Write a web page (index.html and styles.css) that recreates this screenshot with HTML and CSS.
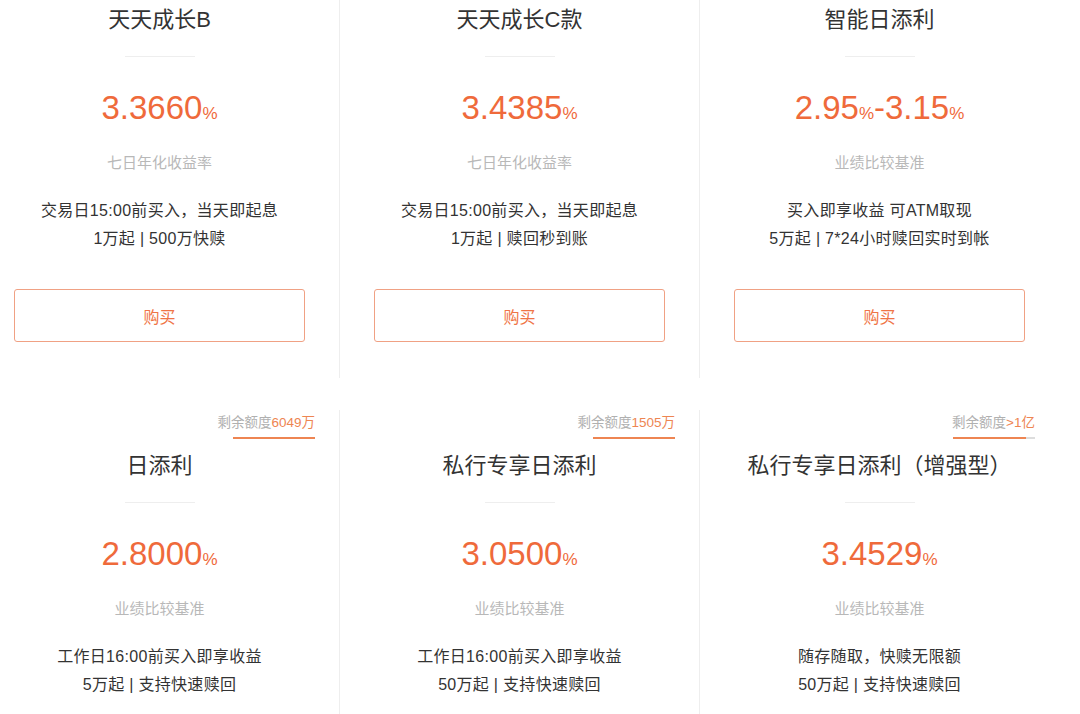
FILE: index.html
```html
<!DOCTYPE html>
<html lang="zh-CN">
<head>
    <meta charset="utf-8">
    <meta name="viewport" content="width=device-width, initial-scale=1.0" />
    <title>理财产品</title>
    <link rel="stylesheet" href="styles.css">
</head>
<body>
    <div class="products">
        <div class="card">
            <div class="quota"></div>
            <h3 class="name">天天成长B</h3>
            <div class="divider"></div>
            <p class="rate">3.3660<small>%</small></p>
            <p class="rate-label">七日年化收益率</p>
            <p class="desc">交易日15:00前买入，当天即起息<br>1万起 | 500万快赎</p>
            <button class="buy-btn">购买</button>
        </div>
        <div class="card">
            <div class="quota"></div>
            <h3 class="name">天天成长C款</h3>
            <div class="divider"></div>
            <p class="rate">3.4385<small>%</small></p>
            <p class="rate-label">七日年化收益率</p>
            <p class="desc">交易日15:00前买入，当天即起息<br>1万起 | 赎回秒到账</p>
            <button class="buy-btn">购买</button>
        </div>
        <div class="card">
            <div class="quota"></div>
            <h3 class="name">智能日添利</h3>
            <div class="divider"></div>
            <p class="rate">2.95<small>%</small>-3.15<small>%</small></p>
            <p class="rate-label">业绩比较基准</p>
            <p class="desc">买入即享收益 可ATM取现<br>5万起 | 7*24小时赎回实时到帐</p>
            <button class="buy-btn">购买</button>
        </div>

        <div class="card">
            <div class="quota">
                <div class="quota-box">
                    <span class="quota-text">剩余额度<em>6049万</em></span>
                    <div class="quota-bar"><div class="quota-fill" style="width: 100%"></div></div>
                </div>
            </div>
            <h3 class="name">日添利</h3>
            <div class="divider"></div>
            <p class="rate">2.8000<small>%</small></p>
            <p class="rate-label">业绩比较基准</p>
            <p class="desc">工作日16:00前买入即享收益<br>5万起 | 支持快速赎回</p>
            <button class="buy-btn">购买</button>
        </div>
        <div class="card">
            <div class="quota">
                <div class="quota-box">
                    <span class="quota-text">剩余额度<em>1505万</em></span>
                    <div class="quota-bar"><div class="quota-fill" style="width: 100%"></div></div>
                </div>
            </div>
            <h3 class="name">私行专享日添利</h3>
            <div class="divider"></div>
            <p class="rate">3.0500<small>%</small></p>
            <p class="rate-label">业绩比较基准</p>
            <p class="desc">工作日16:00前买入即享收益<br>50万起 | 支持快速赎回</p>
            <button class="buy-btn">购买</button>
        </div>
        <div class="card">
            <div class="quota">
                <div class="quota-box">
                    <span class="quota-text">剩余额度<em>&gt;1亿</em></span>
                    <div class="quota-bar"><div class="quota-fill" style="width: 89%"></div></div>
                </div>
            </div>
            <h3 class="name">私行专享日添利（增强型）</h3>
            <div class="divider"></div>
            <p class="rate">3.4529<small>%</small></p>
            <p class="rate-label">业绩比较基准</p>
            <p class="desc">随存随取，快赎无限额<br>50万起 | 支持快速赎回</p>
            <button class="buy-btn">购买</button>
        </div>
    </div>
</body>
</html>
```

FILE: styles.css
```css
* {
    padding: 0;
    margin: 0;
    box-sizing: border-box;
    font-family: "Liberation Sans", "Noto Sans CJK SC", sans-serif;
}
body {
    background-color: #ffffff;
    overflow: hidden;
    height: 714px;
}
.products {
    display: grid;
    grid-template-columns: repeat(3, 360px);
    row-gap: 32px;
    margin: -36px 0 0 -20px;
}
.card {
    background-color: #ffffff;
    border-right: 1px solid #eeeeee;
    text-align: center;
    padding-bottom: 36px;
}
.card:nth-child(3n) {
    border-right-color: transparent;
}
.quota {
    height: 41px;
    display: flex;
    justify-content: flex-end;
    padding-right: 24px;
}
.quota-box {
    display: flex;
    flex-direction: column;
    align-items: flex-end;
    padding-top: 4px;
}
.quota-text {
    font-size: 13.5px;
    line-height: 18px;
    color: #b0b0b0;
}
.quota-text em {
    font-style: normal;
    color: #ee8552;
}
.quota-bar {
    width: 82px;
    height: 2px;
    margin-top: 5px;
    background-color: #dddddd;
}
.quota-fill {
    height: 100%;
    background-color: #ee8552;
}
.name {
    font-size: 22px;
    line-height: 30px;
    font-weight: 400;
    color: #333333;
}
.divider {
    width: 70px;
    height: 1px;
    margin: 21px auto 0;
    background-color: #eeeeee;
}
.rate {
    margin-top: 31px;
    font-size: 33px;
    line-height: 40px;
    color: #ef6a3b;
}
.rate small {
    font-size: 17px;
}
.rate-label {
    margin-top: 19px;
    font-size: 15px;
    line-height: 20px;
    color: #b8b8b8;
}
.desc {
    margin-top: 24px;
    font-size: 16px;
    line-height: 28px;
    letter-spacing: 0.3px;
    color: #333333;
}
.buy-btn {
    display: block;
    width: 291px;
    height: 53px;
    margin: 36px auto 0;
    background-color: #ffffff;
    border: 1px solid #f0a184;
    border-radius: 3px;
    font-size: 16px;
    color: #ef7446;
    cursor: pointer;
}
```
